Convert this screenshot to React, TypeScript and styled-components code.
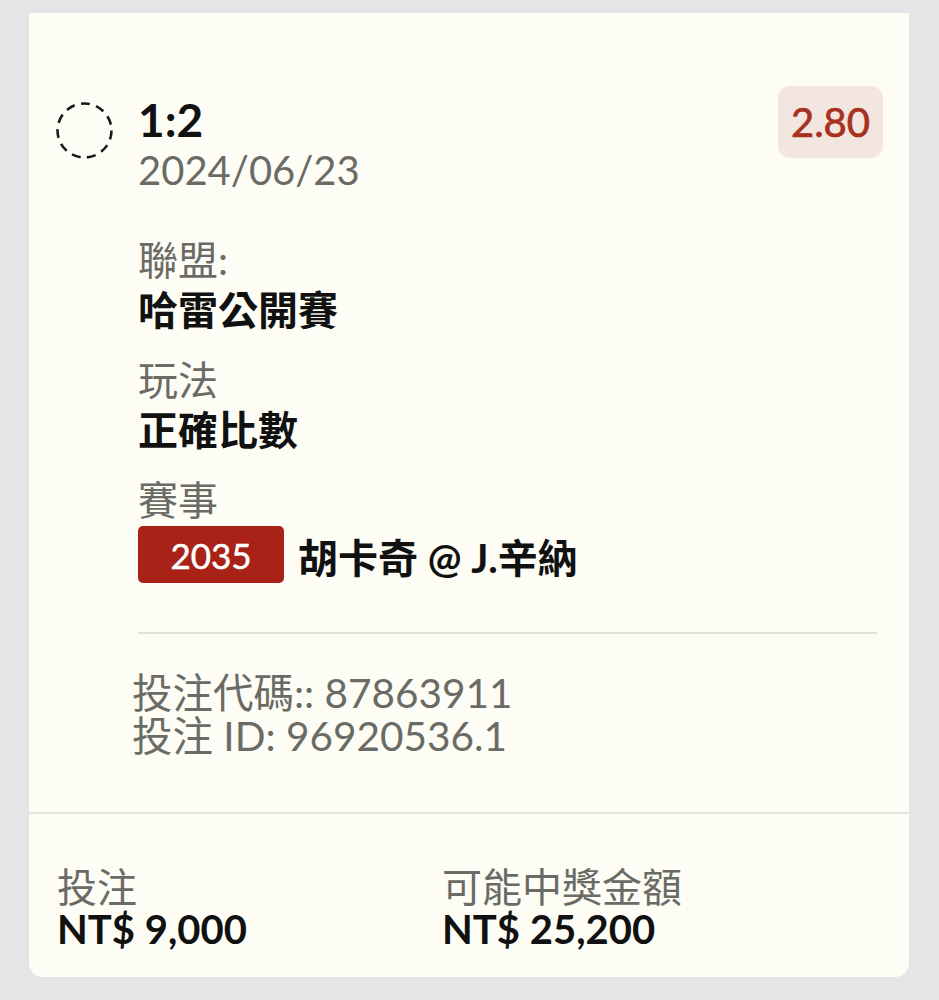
import React from "react";
import styled, { createGlobalStyle } from "styled-components";

const GlobalStyle = createGlobalStyle`
  html, body {
    margin: 0;
    padding: 0;
    background: #e4e5e7;
  }
  body {
    font-family: Lato, "Noto Sans CJK TC", "Noto Sans", sans-serif;
    -webkit-font-smoothing: antialiased;
  }
`;

const Page = styled.div`
  padding: 13px 30px 23px 29px;
`;

const Card = styled.div`
  width: 880px;
  background: #fdfdf5;
  border-radius: 0 0 14px 14px;
  display: flex;
  flex-direction: column;
`;

const Main = styled.section`
  padding: 73px 26px 55px 27px;
`;

const HeaderRow = styled.div`
  display: flex;
  align-items: flex-start;
`;

const StatusIcon = styled.svg`
  flex-shrink: 0;
  width: 57px;
  height: 57px;
  margin-top: 16px;
`;

const HeaderText = styled.div`
  flex: 1;
  margin-left: 25px;
  margin-top: 8px;
  display: flex;
  flex-direction: column;
`;

const Score = styled.div`
  font-size: 46px;
  font-weight: 700;
  line-height: 52px;
  color: #111;
`;

const DateText = styled.div`
  font-size: 40px;
  line-height: 48px;
  color: #6b6b66;
`;

const OddsBadge = styled.div`
  flex-shrink: 0;
  height: 72px;
  padding: 0 13px;
  display: flex;
  align-items: center;
  background: #f3e5df;
  border-radius: 12px;
  color: #a8301f;
  font-size: 40px;
  -webkit-text-stroke: 0.7px #a8301f;
`;

const Body = styled.div`
  padding: 0 6px 0 82px;
  margin-top: 41px;
  display: flex;
  flex-direction: column;
`;

const Fields = styled.div`
  display: flex;
  flex-direction: column;
  gap: 20px;
`;

const Field = styled.div`
  display: flex;
  flex-direction: column;
`;

const Label = styled.div`
  font-size: 40px;
  line-height: 50px;
  color: #6b6b66;
`;

const Value = styled.div`
  font-size: 40px;
  line-height: 50px;
  font-weight: 700;
  color: #111;
`;

const MatchRow = styled.div`
  display: flex;
  align-items: center;
  gap: 14px;
  height: 57px;
  margin-top: 1px;
`;

const MatchBadge = styled.div`
  width: 146px;
  height: 57px;
  display: flex;
  align-items: center;
  justify-content: center;
  background: #a82218;
  border-radius: 5px;
  color: #fff;
  font-size: 35px;
  -webkit-text-stroke: 0.5px #fff;
`;

const MatchName = styled.div`
  font-size: 40px;
  line-height: 50px;
  font-weight: 700;
  color: #111;
  padding-top: 6px;
`;

const Separator = styled.div`
  height: 2px;
  background: #e0dfd9;
  margin-top: 49px;
`;

const CodeBlock = styled.div`
  margin: 37px 0 0 -6px;
  font-size: 40.5px;
  line-height: 43px;
  color: #6b6b66;
`;

const Footer = styled.footer`
  border-top: 2px solid #e3e2dc;
  padding: 52px 28px 27px 28px;
  display: grid;
  grid-template-columns: 385px 1fr;
`;

const Stat = styled.div`
  display: flex;
  flex-direction: column;
`;

const StatLabel = styled.div`
  font-size: 40px;
  line-height: 42px;
  color: #6b6b66;
`;

const StatValue = styled.div`
  font-size: 40px;
  line-height: 42px;
  font-weight: 700;
  color: #111;
`;

export default function App() {
  return (
    <>
      <GlobalStyle />
      <Page>
        <Card>
          <Main>
            <HeaderRow>
              <StatusIcon viewBox="0 0 57 57">
                <circle
                  cx="28.5"
                  cy="28.5"
                  r="27"
                  fill="none"
                  stroke="#1a1a1a"
                  strokeWidth="2.6"
                  strokeDasharray="9 6.4"
                />
              </StatusIcon>
              <HeaderText>
                <Score>1:2</Score>
                <DateText>2024/06/23</DateText>
              </HeaderText>
              <OddsBadge>2.80</OddsBadge>
            </HeaderRow>
            <Body>
              <Fields>
                <Field>
                  <Label>聯盟:</Label>
                  <Value>哈雷公開賽</Value>
                </Field>
                <Field>
                  <Label>玩法</Label>
                  <Value>正確比數</Value>
                </Field>
                <Field>
                  <Label>賽事</Label>
                  <MatchRow>
                    <MatchBadge>2035</MatchBadge>
                    <MatchName>胡卡奇 @ J.辛納</MatchName>
                  </MatchRow>
                </Field>
              </Fields>
              <Separator />
              <CodeBlock>
                <div>投注代碼:: 87863911</div>
                <div>投注 ID: 96920536.1</div>
              </CodeBlock>
            </Body>
          </Main>
          <Footer>
            <Stat>
              <StatLabel>投注</StatLabel>
              <StatValue>NT$ 9,000</StatValue>
            </Stat>
            <Stat>
              <StatLabel>可能中獎金額</StatLabel>
              <StatValue>NT$ 25,200</StatValue>
            </Stat>
          </Footer>
        </Card>
      </Page>
    </>
  );
}
